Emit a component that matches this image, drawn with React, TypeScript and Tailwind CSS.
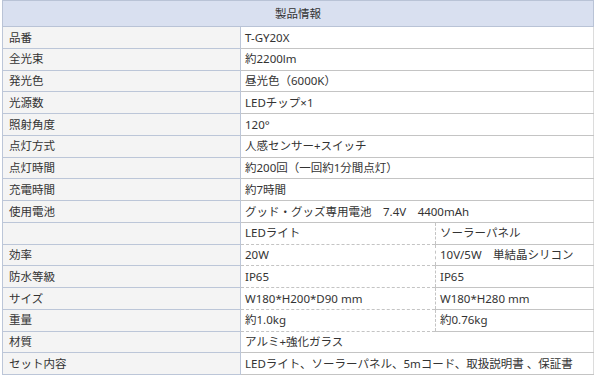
const ROWS: { label: string; value?: string; cols?: [string, string] }[] = [
  { label: '品番', value: 'T-GY20X' },
  { label: '全光束', value: '約2200lm' },
  { label: '発光色', value: '昼光色（6000K）' },
  { label: '光源数', value: 'LEDチップ×1' },
  { label: '照射角度', value: '120°' },
  { label: '点灯方式', value: '人感センサー+スイッチ' },
  { label: '点灯時間', value: '約200回（一回約1分間点灯）' },
  { label: '充電時間', value: '約7時間' },
  { label: '使用電池', value: 'グッド・グッズ専用電池　7.4V　4400mAh' },
  { label: '', cols: ['LEDライト', 'ソーラーパネル'] },
  { label: '効率', cols: ['20W', '10V/5W　単結晶シリコン'] },
  { label: '防水等級', cols: ['IP65', 'IP65'] },
  { label: 'サイズ', cols: ['W180*H200*D90 mm', 'W180*H280 mm'] },
  { label: '重量', cols: ['約1.0kg', '約0.76kg'] },
  { label: '材質', value: 'アルミ+強化ガラス' },
  { label: 'セット内容', value: 'LEDライト、ソーラーパネル、5mコード、取扱説明書 、保証書' },
];

export default function App() {
  return (
    <div className="w-[600px] h-[378px] bg-white pl-[2px] font-['Noto_Sans','Noto_Sans_CJK_JP',sans-serif] text-[11.5px] text-[#333]">
      <table className="w-[591px] border-collapse table-fixed">
        <colgroup>
          <col className="w-[238px]" />
          <col className="w-[195px]" />
          <col className="w-[158px]" />
        </colgroup>
        <thead>
          <tr className="h-[26px]">
            <th
              colSpan={3}
              className="bg-[#d9e0f0] border border-[#b9c3d6] font-normal text-center text-[#333]"
            >
              製品情報
            </th>
          </tr>
        </thead>
        <tbody>
          {ROWS.map((row, i) => (
            <tr key={i} className="h-[21.75px]">
              <td className="bg-[#f4f4f4] border border-[#bcc6d8] pl-[6px] leading-none">
                {row.label}
              </td>
              {row.cols ? (
                <>
                  <td className="border-b border-dashed border-b-[#c4c4c4] border-l border-l-[#cfd4dc] border-r border-r-[#c4c4c4] pl-[4px] leading-none">
                    {row.cols[0]}
                  </td>
                  <td className="border-b border-dashed border-b-[#c4c4c4] border-r border-solid border-r-[#dcdcdc] pl-[4px] leading-none">
                    {row.cols[1]}
                  </td>
                </>
              ) : (
                <td
                  colSpan={2}
                  className="border-b border-dashed border-b-[#c4c4c4] border-l border-l-[#cfd4dc] border-r border-solid border-r-[#dcdcdc] pl-[4px] leading-none"
                >
                  {row.value}
                </td>
              )}
            </tr>
          ))}
        </tbody>
      </table>
    </div>
  );
}
